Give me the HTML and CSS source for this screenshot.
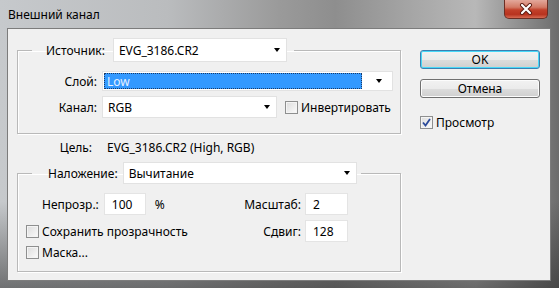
FILE: index.html
```html
<!DOCTYPE html>
<html lang="ru">
<head>
    <meta charset="utf-8">
    <title>Внешний канал</title>
    <link rel="stylesheet" href="styles.css">
</head>
<body>
    <div class="window">
        <div class="titlebar">
            <span class="title">Внешний канал</span>
            <span class="close">
                <svg width="14" height="12" viewBox="0 0 14 12">
                    <path d="M3 2 L11 10 M11 2 L3 10" stroke="#5a1a10" stroke-width="4" stroke-linecap="round"/>
                    <path d="M3 2 L11 10 M11 2 L3 10" stroke="#fff" stroke-width="2.2" stroke-linecap="round"/>
                </svg>
            </span>
        </div>

        <div class="client">
            <div class="main">
                <fieldset class="group source">
                    <legend>
                        <span class="lbl">Источник:</span>
                        <span class="select w-source">EVG_3186.CR2<i class="arrow"></i></span>
                    </legend>
                    <div class="row r-layer">
                        <span class="lbl">Слой:</span>
                        <span class="select w-layer"><span class="hl">Low</span><i class="arrow"></i></span>
                    </div>
                    <div class="row r-channel">
                        <span class="lbl">Канал:</span>
                        <span class="select w-channel">RGB<i class="arrow"></i></span>
                        <span class="check invert"><span class="box"></span>Инвертировать</span>
                    </div>
                </fieldset>

                <div class="target">
                    <span class="lbl">Цель:</span>
                    <span>EVG_3186.CR2 (High, RGB)</span>
                </div>

                <fieldset class="group blend">
                    <legend>
                        <span class="lbl">Наложение:</span>
                        <span class="select w-blend">Вычитание<i class="arrow"></i></span>
                    </legend>
                    <div class="blend-grid">
                        <div class="opacity">
                            <span>Непрозр.:</span>
                            <span class="field w-opacity">100</span>
                            <span class="pct">%</span>
                        </div>
                        <div class="num">
                            <span>Масштаб:</span>
                            <span class="field w-num">2</span>
                        </div>
                        <span class="check"><span class="box"></span>Сохранить прозрачность</span>
                        <div class="num">
                            <span>Сдвиг:</span>
                            <span class="field w-num">128</span>
                        </div>
                        <span class="check mask"><span class="box"></span>Маска...</span>
                    </div>
                </fieldset>
            </div>

            <div class="side">
                <span class="btn default">OK</span>
                <span class="btn">Отмена</span>
                <span class="check preview">
                    <span class="box">
                        <svg width="9" height="9" viewBox="0 0 9 9">
                            <path d="M1 4.5 L3.5 7.5 L8 1" fill="none" stroke="#2b4a9a" stroke-width="1.8"/>
                        </svg>
                    </span>Просмотр
                </span>
            </div>
        </div>
    </div>
</body>
</html>
```

FILE: styles.css
```css
body {
    margin: 0;
    font-family: "Noto Sans", sans-serif;
    font-size: 12px;
    color: #000;
}

.window {
    width: 559px;
    height: 288px;
    box-sizing: border-box;
    padding: 0 8px 7px 7px;
    display: flex;
    flex-direction: column;
    background:
        linear-gradient(to bottom, rgba(0, 0, 0, 0) 0%, rgba(0, 0, 0, 0) 70%, rgba(40, 40, 40, 0.55) 100%),
        linear-gradient(to right, #c6c9cc 0%, #babcbe 30%, #9a9a9a 50%, #8e8e8e 60%, #a8a8a8 75%, #b8b8b8 85%, #6c6c6c 100%);
}

.titlebar {
    height: 28px;
    display: flex;
    justify-content: space-between;
    align-items: flex-start;
}

.title {
    padding-top: 6px;
    padding-left: 1px;
}

.close {
    width: 44px;
    height: 19px;
    margin-right: 3px;
    box-sizing: border-box;
    border: 1px solid #6b2e24;
    border-top: none;
    border-radius: 0 0 5px 5px;
    background: linear-gradient(to bottom, #e3a89b 0%, #d37a66 40%, #c2402a 55%, #b8331f 80%, #d66a52 100%);
    display: flex;
    align-items: center;
    justify-content: center;
}

.client {
    flex: 1;
    display: flex;
    border: 1px solid #7c7c7c;
    background-color: #f0f0f0;
    padding: 9px 0 0 9px;
}

.main {
    width: 384px;
}

.group {
    margin: 0;
    padding: 0;
    min-width: 0;
    border: 1px solid #b9b9b9;
    box-shadow: inset 1px 1px 0 #fff, 1px 1px 0 #fff;
}

.group legend {
    display: flex;
    align-items: center;
    margin-left: 14px;
    padding: 0 7px 0 14px;
}

.blend legend {
    padding: 0 4px 0 16px;
}

.group legend .lbl {
    margin-right: 8px;
}

.blend legend .lbl {
    margin-right: 5px;
}

.select {
    box-sizing: border-box;
    display: flex;
    align-items: center;
    justify-content: space-between;
    background-color: #fff;
    border: 1px solid #e2e2e2;
    padding: 0 6px 0 5px;
}

.arrow {
    width: 0;
    height: 0;
    border-left: 3.5px solid transparent;
    border-right: 3.5px solid transparent;
    border-top: 4px solid #000;
}

.w-source {
    width: 174px;
    height: 24px;
}

.w-blend {
    width: 234px;
    height: 22px;
}

.w-layer {
    width: 291px;
    height: 20px;
    padding: 1px 10px 1px 1px;
}

.w-layer .hl {
    flex: 1;
    align-self: stretch;
    margin-right: 14px;
    background-color: #3399ff;
    color: #e6f0ff;
    outline: 1px dotted #1a3a66;
    outline-offset: -1px;
    padding-left: 3px;
    display: flex;
    align-items: center;
}

.w-channel {
    width: 175px;
    height: 22px;
}

.source .row {
    display: flex;
    align-items: center;
}

.row .lbl,
.target .lbl {
    width: 79px;
    text-align: right;
    margin-right: 5px;
}

.r-layer {
    margin-top: 9px;
}

.r-channel {
    margin-top: 5px;
    margin-bottom: 15px;
}

.check {
    display: flex;
    align-items: center;
}

.box {
    width: 13px;
    height: 13px;
    box-sizing: border-box;
    border: 1px solid #8e8f8f;
    background: linear-gradient(to bottom right, #dcdcdc, #fbfbfb);
    box-shadow: inset 0 0 0 1px #f4f4f4;
    margin-right: 3px;
    display: flex;
    align-items: center;
    justify-content: center;
}

.invert {
    margin-left: 8px;
}

.target {
    display: flex;
    align-items: center;
    height: 16px;
    margin: 5px 0 7px 0;
}

.target .lbl {
    width: 75px;
    margin-right: 15px;
}

.blend-grid {
    display: grid;
    grid-template-columns: 1fr auto;
    grid-template-rows: 22px 22px 14px;
    row-gap: 5px;
    align-items: center;
    padding: 9px 52px 10px 8px;
}

.blend-grid .mask {
    margin-top: -3px;
}

.opacity {
    display: flex;
    align-items: center;
    padding-left: 16px;
}

.opacity .field {
    margin-left: 5px;
}

.pct {
    margin-left: 9px;
}

.num {
    display: flex;
    align-items: center;
    justify-content: flex-end;
}

.field {
    box-sizing: border-box;
    height: 22px;
    background-color: #fff;
    border: 1px solid #e4e4e4;
    display: flex;
    align-items: center;
    padding-left: 7px;
}

.w-opacity {
    width: 42px;
}

.w-num {
    width: 43px;
    margin-left: 4px;
}

.side {
    display: flex;
    flex-direction: column;
    align-items: flex-start;
    margin-left: 19px;
    padding-top: 12px;
}

.btn {
    box-sizing: border-box;
    width: 120px;
    height: 19px;
    display: flex;
    align-items: center;
    justify-content: center;
    border: 1px solid #707070;
    border-radius: 3px;
    background: linear-gradient(to bottom, #f2f2f2 0%, #ebebeb 50%, #dddddd 51%, #cfcfcf 100%);
    box-shadow: inset 0 0 0 1px #fcfcfc;
}

.btn.default {
    border-color: #3c7fb1;
    box-shadow: inset 0 0 0 1px #48d8f8;
    margin-bottom: 10px;
}

.preview {
    margin-top: 16px;
}
```
